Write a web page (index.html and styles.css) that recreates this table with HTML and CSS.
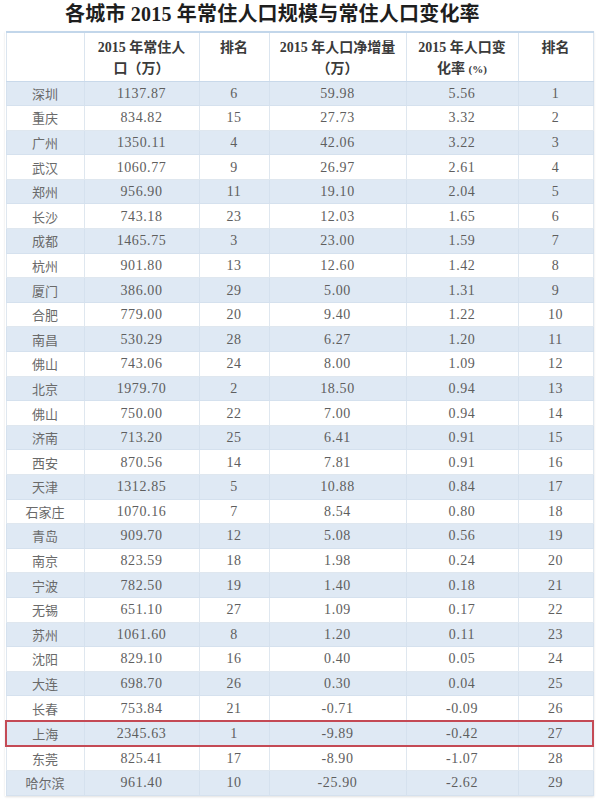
FILE: index.html
```html
<!DOCTYPE html>
<html lang="zh-CN">
<head>
<meta charset="utf-8">
<title>各城市 2015 年常住人口规模与常住人口变化率</title>
<link rel="stylesheet" href="styles.css">
</head>
<body>
<div class="page">
  <h1 class="title">各城市 2015 年常住人口规模与常住人口变化率</h1>
  <table class="data">
    <colgroup>
      <col class="c1"><col class="c2"><col class="c3"><col class="c4"><col class="c5"><col class="c6">
    </colgroup>
    <thead>
      <tr>
        <th></th>
        <th>2015 年常住人<br>口（万）</th>
        <th>排名</th>
        <th>2015 年人口净增量<br>（万）</th>
        <th>2015 年人口变<br>化率 <span class="pct">(%)</span></th>
        <th>排名</th>
      </tr>
    </thead>
    <tbody>
      <tr><td class="city">深圳</td><td>1137.87</td><td>6</td><td>59.98</td><td>5.56</td><td>1</td></tr>
      <tr><td class="city">重庆</td><td>834.82</td><td>15</td><td>27.73</td><td>3.32</td><td>2</td></tr>
      <tr><td class="city">广州</td><td>1350.11</td><td>4</td><td>42.06</td><td>3.22</td><td>3</td></tr>
      <tr><td class="city">武汉</td><td>1060.77</td><td>9</td><td>26.97</td><td>2.61</td><td>4</td></tr>
      <tr><td class="city">郑州</td><td>956.90</td><td>11</td><td>19.10</td><td>2.04</td><td>5</td></tr>
      <tr><td class="city">长沙</td><td>743.18</td><td>23</td><td>12.03</td><td>1.65</td><td>6</td></tr>
      <tr><td class="city">成都</td><td>1465.75</td><td>3</td><td>23.00</td><td>1.59</td><td>7</td></tr>
      <tr><td class="city">杭州</td><td>901.80</td><td>13</td><td>12.60</td><td>1.42</td><td>8</td></tr>
      <tr><td class="city">厦门</td><td>386.00</td><td>29</td><td>5.00</td><td>1.31</td><td>9</td></tr>
      <tr><td class="city">合肥</td><td>779.00</td><td>20</td><td>9.40</td><td>1.22</td><td>10</td></tr>
      <tr><td class="city">南昌</td><td>530.29</td><td>28</td><td>6.27</td><td>1.20</td><td>11</td></tr>
      <tr><td class="city">佛山</td><td>743.06</td><td>24</td><td>8.00</td><td>1.09</td><td>12</td></tr>
      <tr><td class="city">北京</td><td>1979.70</td><td>2</td><td>18.50</td><td>0.94</td><td>13</td></tr>
      <tr><td class="city">佛山</td><td>750.00</td><td>22</td><td>7.00</td><td>0.94</td><td>14</td></tr>
      <tr><td class="city">济南</td><td>713.20</td><td>25</td><td>6.41</td><td>0.91</td><td>15</td></tr>
      <tr><td class="city">西安</td><td>870.56</td><td>14</td><td>7.81</td><td>0.91</td><td>16</td></tr>
      <tr><td class="city">天津</td><td>1312.85</td><td>5</td><td>10.88</td><td>0.84</td><td>17</td></tr>
      <tr><td class="city">石家庄</td><td>1070.16</td><td>7</td><td>8.54</td><td>0.80</td><td>18</td></tr>
      <tr><td class="city">青岛</td><td>909.70</td><td>12</td><td>5.08</td><td>0.56</td><td>19</td></tr>
      <tr><td class="city">南京</td><td>823.59</td><td>18</td><td>1.98</td><td>0.24</td><td>20</td></tr>
      <tr><td class="city">宁波</td><td>782.50</td><td>19</td><td>1.40</td><td>0.18</td><td>21</td></tr>
      <tr><td class="city">无锡</td><td>651.10</td><td>27</td><td>1.09</td><td>0.17</td><td>22</td></tr>
      <tr><td class="city">苏州</td><td>1061.60</td><td>8</td><td>1.20</td><td>0.11</td><td>23</td></tr>
      <tr><td class="city">沈阳</td><td>829.10</td><td>16</td><td>0.40</td><td>0.05</td><td>24</td></tr>
      <tr><td class="city">大连</td><td>698.70</td><td>26</td><td>0.30</td><td>0.04</td><td>25</td></tr>
      <tr><td class="city">长春</td><td>753.84</td><td>21</td><td>-0.71</td><td>-0.09</td><td>26</td></tr>
      <tr class="mark"><td class="city">上海</td><td>2345.63</td><td>1</td><td>-9.89</td><td>-0.42</td><td>27</td></tr>
      <tr><td class="city">东莞</td><td>825.41</td><td>17</td><td>-8.90</td><td>-1.07</td><td>28</td></tr>
      <tr><td class="city">哈尔滨</td><td>961.40</td><td>10</td><td>-25.90</td><td>-2.62</td><td>29</td></tr>
    </tbody>
  </table>
</div>
</body>
</html>
```

FILE: styles.css
```css
html, body {
  margin: 0;
  padding: 0;
  background: #ffffff;
}

.page {
  width: 600px;
  height: 802px;
  overflow: hidden;
  padding: 0 0 0 5px;
  box-sizing: border-box;
  font-family: "Liberation Serif", "Noto Sans CJK SC", serif;
}

.title {
  margin: 0;
  height: 31px;
  padding: 2px 0 0 60px;
  box-sizing: border-box;
  font-size: 20px;
  line-height: 24px;
  font-weight: 700;
  color: #1e1e1e;
  letter-spacing: 0.2px;
}

.data {
  width: 587px;
  table-layout: fixed;
  border-collapse: collapse;
  border: 1px solid #c7d8e9;
  border-top: 2px solid #c2d6ea;
  box-shadow: 0 1px 2px rgba(0, 0, 0, 0.12);
}

.c1 { width: 78px; }
.c2 { width: 115px; }
.c3 { width: 70px; }
.c4 { width: 137px; }
.c5 { width: 112px; }
.c6 { width: 75px; }

.data th {
  height: 49px;
  padding: 4px 2px 0;
  box-sizing: border-box;
  vertical-align: top;
  text-align: center;
  font-size: 14px;
  line-height: 21px;
  font-weight: 700;
  color: #3a3a3a;
  background: #ffffff;
  border: 1px solid #dbe5ef;
  border-bottom: 1px solid #c9d9ea;
}

.data th .pct {
  font-size: 11px;
}

.data td {
  height: 23.6px;
  padding: 0;
  text-align: center;
  vertical-align: middle;
  font-size: 14px;
  line-height: 15px;
  color: #5e5e5e;
  border: 1px solid #dfe7ef;
  letter-spacing: 0.6px;
}

.data td.city {
  font-family: "Noto Sans CJK SC", sans-serif;
  font-size: 13px;
  letter-spacing: 0;
  color: #6a6a6a;
}

.data tbody tr:nth-child(odd) td {
  background: #dfe9f4;
  border-color: #d5e1ee;
}

.data tbody tr.mark td {
  height: 22.6px;
  border-top: 2px solid #c44a55;
  border-bottom: 2px solid #c44a55;
}

.data tbody tr.mark td:first-child {
  border-left: 2px solid #c44a55;
}

.data tbody tr.mark td:last-child {
  border-right: 2px solid #c44a55;
}
```
